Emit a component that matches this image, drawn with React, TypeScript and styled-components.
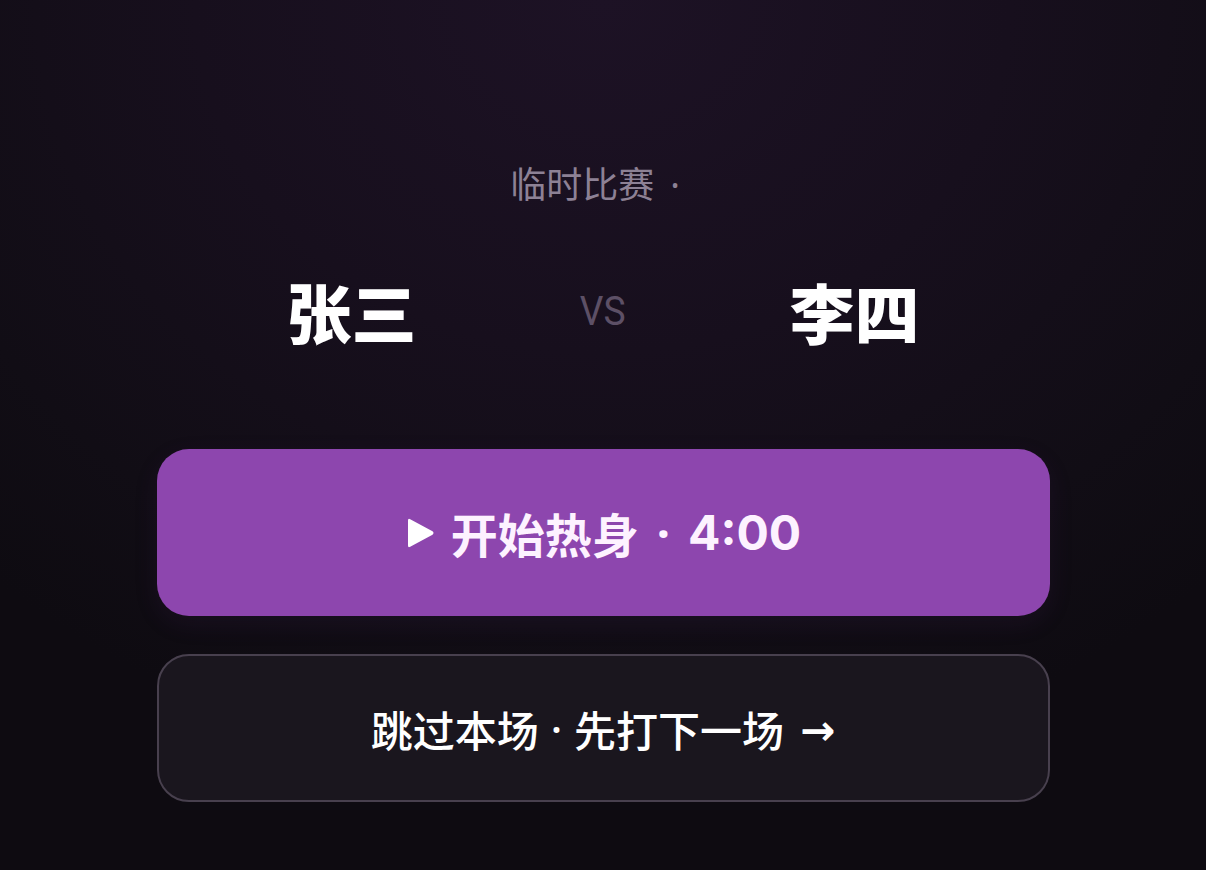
import styled, { createGlobalStyle } from "styled-components";

const GlobalStyle = createGlobalStyle`
  html, body {
    margin: 0;
    padding: 0;
    background: #0f0c13;
  }
  body {
    font-family: "Noto Sans CJK SC", "Noto Sans", sans-serif;
  }
`;

const Page = styled.div`
  width: 100%;
  min-height: 870px;
  display: flex;
  flex-direction: column;
  align-items: center;
  padding-top: 160px;
  box-sizing: border-box;
  background: radial-gradient(
    ellipse 75% 90% at 50% 0%,
    #1d1225 0%,
    #170f1d 45%,
    #110d15 80%,
    #0e0b11 100%
  );
`;

const Title = styled.div`
  font-size: 36px;
  line-height: 44px;
  color: #8d8195;
`;

const Dot = styled.span<{ $gap: number }>`
  font-family: "Noto Sans", "DejaVu Sans", sans-serif;
  margin: 0 ${(p) => p.$gap}px;
`;

const Matchup = styled.div`
  display: flex;
  align-items: center;
  gap: 162px;
  margin-top: 66px;
`;

const Player = styled.div`
  font-size: 65px;
  line-height: 77px;
  font-weight: 900;
  color: #ffffff;
`;

const Versus = styled.div`
  font-family: "Roboto", "DejaVu Sans", sans-serif;
  font-size: 40px;
  line-height: 77px;
  color: #5d5066;
  transform: scaleX(0.93);
`;

const Actions = styled.div`
  width: 893px;
  display: flex;
  flex-direction: column;
  gap: 38px;
  margin-top: 99px;
`;

const Button = styled.button<{ $primary?: boolean }>`
  display: flex;
  align-items: center;
  justify-content: center;
  width: 100%;
  height: ${(p) => (p.$primary ? "167px" : "148px")};
  border-radius: 32px;
  font-family: "Noto Sans CJK SC", "Noto Sans", sans-serif;
  font-size: ${(p) => (p.$primary ? "47px" : "42px")};
  font-weight: ${(p) => (p.$primary ? 700 : 500)};
  color: ${(p) => (p.$primary ? "#fdf2ff" : "#ffffff")};
  background: ${(p) => (p.$primary ? "#8d46ae" : "#1a161e")};
  border: ${(p) => (p.$primary ? "none" : "2px solid #48404e")};
  box-shadow: ${(p) =>
    p.$primary ? "0 8px 24px rgba(90, 40, 120, 0.12)" : "none"};
  cursor: pointer;
  white-space: pre;
`;

const PlayIcon = styled.svg`
  width: 30px;
  height: 32px;
  margin-right: 16px;
  flex-shrink: 0;
`;

const Time = styled.span`
  font-family: "Inter", "Noto Sans", sans-serif;
  font-size: 48px;
  font-weight: 700;
`;

const Arrow = styled.span`
  font-family: "Noto Sans", "DejaVu Sans", sans-serif;
  font-weight: 700;
  margin-left: 16px;
`;

export default function App() {
  return (
    <>
      <GlobalStyle />
      <Page>
        <Title>
          临时比赛<Dot $gap={16}>·</Dot>
        </Title>
        <Matchup>
          <Player>张三</Player>
          <Versus>VS</Versus>
          <Player>李四</Player>
        </Matchup>
        <Actions>
          <Button $primary>
            <PlayIcon viewBox="0 0 30 32">
              <path
                d="M3 3.5 Q3 1 5.2 2.2 L27.5 14.3 Q29.5 16 27.5 17.7 L5.2 29.8 Q3 31 3 28.5 Z"
                fill="#ffffff"
              />
            </PlayIcon>
            开始热身<Dot $gap={18}>·</Dot>
            <Time>4:00</Time>
          </Button>
          <Button>
            跳过本场<Dot $gap={12}>·</Dot>先打下一场<Arrow>→</Arrow>
          </Button>
        </Actions>
      </Page>
    </>
  );
}
